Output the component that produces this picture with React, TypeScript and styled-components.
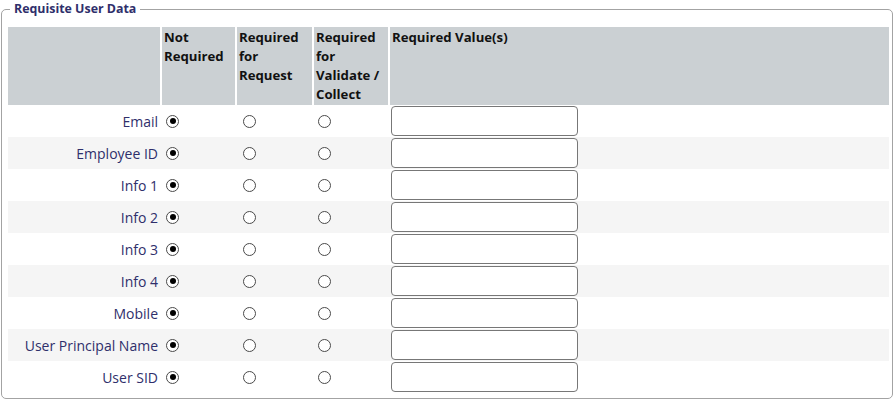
import React from "react";
import styled, { createGlobalStyle } from "styled-components";

const GlobalStyle = createGlobalStyle`
  html, body { margin: 0; padding: 0; background: #ffffff; }
  body { font-family: "Open Sans", Lato, "Liberation Sans", sans-serif; }
`;

const Fieldset = styled.fieldset`
  margin: 0 2px 0 1px;
  padding: 9px 3px 4px 6px;
  border: 1px solid #a3a3a3;
  border-radius: 5px;
  min-width: 0;
  height: 399px;
  box-sizing: border-box;
`;

const Legend = styled.legend`
  margin-left: 2px;
  padding: 0 4px;
  font-size: 12.4px;
  line-height: 18px;
  font-weight: 700;
  color: #2f2f6b;
`;

const Table = styled.table`
  width: 100%;
  border-collapse: separate;
  border-spacing: 0;
  table-layout: fixed;
`;

const HeadCell = styled.th<{ $w?: number }>`
  box-sizing: border-box;
  ${(p) => (p.$w ? `width: ${p.$w}px;` : "")}
  background: #cbd0d3;
  border-left: 2px solid #ffffff;
  &:first-child { border-left: none; }
  padding: 1px 2px 0 2px;
  height: 78px;
  text-align: left;
  vertical-align: top;
  font-size: 13.2px;
  line-height: 19px;
  font-weight: 700;
  color: #111111;
`;

const Row = styled.tr<{ $striped: boolean }>`
  background: ${(p) => (p.$striped ? "#f5f5f5" : "#ffffff")};
`;

const LabelCell = styled.td`
  height: 32px;
  padding: 0 2px 0 0;
  text-align: right;
  vertical-align: middle;
  font-size: 14px;
  color: #2f2f6b;
  white-space: nowrap;
`;

const RadioCell = styled.td<{ $inset?: number }>`
  padding: 0 0 0 ${(p) => p.$inset ?? 4}px;
  border-left: 2px solid transparent;
  vertical-align: middle;
`;

const ValueCell = styled.td`
  padding: 0 0 0 1px;
  border-left: 2px solid transparent;
  vertical-align: middle;
`;

const Radio = styled.input.attrs({ type: "radio" })`
  appearance: none;
  -webkit-appearance: none;
  display: block;
  margin: 0;
  width: 13px;
  height: 13px;
  border: 1px solid #4a4a4a;
  border-radius: 50%;
  background: #ffffff;
  box-sizing: border-box;
  position: relative;
  &:checked::after {
    content: "";
    position: absolute;
    left: 2.5px;
    top: 2.5px;
    width: 6px;
    height: 6px;
    border-radius: 50%;
    background: #000000;
  }
`;

const ValueInput = styled.input.attrs({ type: "text" })`
  display: block;
  box-sizing: border-box;
  width: 187px;
  height: 30px;
  margin: 0;
  border: 1px solid #777777;
  border-radius: 4px;
  background: #ffffff;
  font-family: inherit;
`;

const fields = [
  "Email",
  "Employee ID",
  "Info 1",
  "Info 2",
  "Info 3",
  "Info 4",
  "Mobile",
  "User Principal Name",
  "User SID",
];

export default function App() {
  return (
    <>
      <GlobalStyle />
      <Fieldset>
        <Legend>Requisite User Data</Legend>
        <Table>
          <thead>
            <tr>
              <HeadCell $w={152}></HeadCell>
              <HeadCell $w={75}>
                Not
                <br />
                Required
              </HeadCell>
              <HeadCell $w={77}>
                Required
                <br />
                for
                <br />
                Request
              </HeadCell>
              <HeadCell $w={76}>
                Required
                <br />
                for
                <br />
                Validate /
                <br />
                Collect
              </HeadCell>
              <HeadCell>Required Value(s)</HeadCell>
            </tr>
          </thead>
          <tbody>
            {fields.map((f, i) => (
              <Row key={f} $striped={i % 2 === 1}>
                <LabelCell>{f}</LabelCell>
                <RadioCell>
                  <Radio name={`req-${i}`} defaultChecked />
                </RadioCell>
                <RadioCell $inset={6}>
                  <Radio name={`req-${i}`} />
                </RadioCell>
                <RadioCell>
                  <Radio name={`req-${i}`} />
                </RadioCell>
                <ValueCell>
                  <ValueInput />
                </ValueCell>
              </Row>
            ))}
          </tbody>
        </Table>
      </Fieldset>
    </>
  );
}
